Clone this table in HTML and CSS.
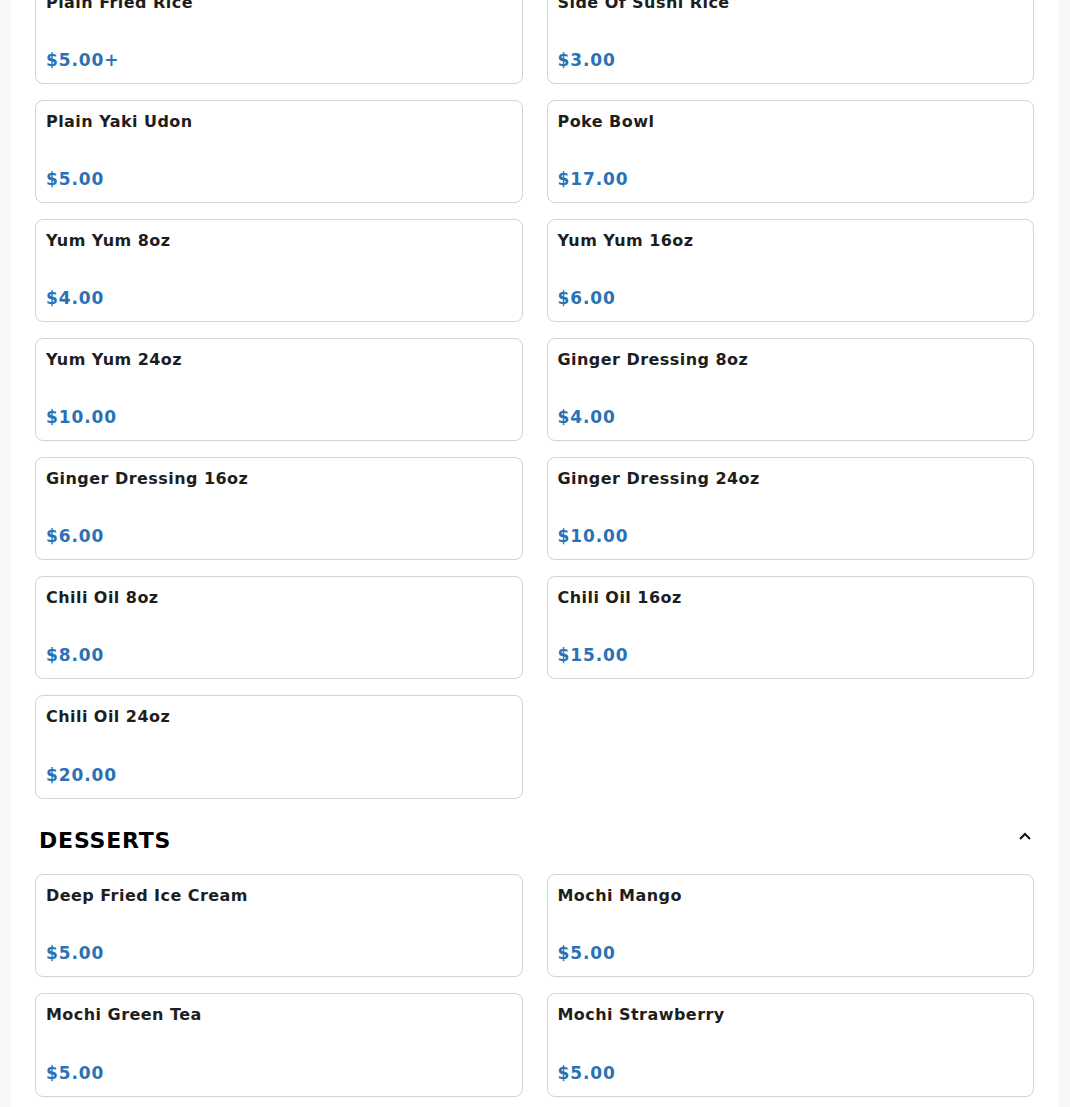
FILE: index.html
```html
<!DOCTYPE html>
<html>
<head>
<meta charset="utf-8">
<link rel="stylesheet" href="styles.css">
</head>
<body>
<main class="menu">
  <section class="category category-scrolled">
    <div class="grid">
      <div class="card"><div class="name">Plain Fried Rice</div><div class="price">$5.00+</div></div>
      <div class="card"><div class="name">Side Of Sushi Rice</div><div class="price">$3.00</div></div>
      <div class="card"><div class="name">Plain Yaki Udon</div><div class="price">$5.00</div></div>
      <div class="card"><div class="name">Poke Bowl</div><div class="price">$17.00</div></div>
      <div class="card"><div class="name">Yum Yum 8oz</div><div class="price">$4.00</div></div>
      <div class="card"><div class="name">Yum Yum 16oz</div><div class="price">$6.00</div></div>
      <div class="card"><div class="name">Yum Yum 24oz</div><div class="price">$10.00</div></div>
      <div class="card"><div class="name">Ginger Dressing 8oz</div><div class="price">$4.00</div></div>
      <div class="card"><div class="name">Ginger Dressing 16oz</div><div class="price">$6.00</div></div>
      <div class="card"><div class="name">Ginger Dressing 24oz</div><div class="price">$10.00</div></div>
      <div class="card"><div class="name">Chili Oil 8oz</div><div class="price">$8.00</div></div>
      <div class="card"><div class="name">Chili Oil 16oz</div><div class="price">$15.00</div></div>
      <div class="card card-last"><div class="name">Chili Oil 24oz</div><div class="price">$20.00</div></div>
    </div>
  </section>
  <section class="category">
    <div class="cat-head">
      <h2 class="cat-title">DESSERTS</h2>
      <svg class="chevron" width="14" height="10" viewBox="0 0 14 10"><path d="M2 8 L7 3 L12 8" fill="none" stroke="#111" stroke-width="2"/></svg>
    </div>
    <div class="grid">
      <div class="card"><div class="name">Deep Fried Ice Cream</div><div class="price">$5.00</div></div>
      <div class="card"><div class="name">Mochi Mango</div><div class="price">$5.00</div></div>
      <div class="card card-last"><div class="name">Mochi Green Tea</div><div class="price">$5.00</div></div>
      <div class="card card-last"><div class="name">Mochi Strawberry</div><div class="price">$5.00</div></div>
    </div>
  </section>
</main>
</body>
</html>
```
FILE: styles.css
```css
html, body {
  margin: 0;
  padding: 0;
  background: #f7f7f7;
  font-family: "DejaVu Sans", sans-serif;
  overflow: hidden;
}
.menu {
  margin: 0 11px;
  background: #fff;
  padding: 0 25px 40px 24px;
  min-height: 1200px;
}
.category-scrolled {
  margin-top: -19px;
}
.grid {
  display: grid;
  grid-template-columns: 1fr 1fr;
  column-gap: 24px;
  row-gap: 16px;
}
.card {
  box-sizing: border-box;
  border: 1px solid #d3d3d3;
  border-radius: 8px;
  padding: 11px 10px 13px;
  height: 103px;
  display: flex;
  flex-direction: column;
  justify-content: space-between;
}
.card-last {
  height: 104px;
  padding-top: 11px;
  padding-bottom: 13px;
}
.name {
  font-size: 16px;
  font-weight: bold;
  color: #1e1e1e;
  letter-spacing: 0.45px;
}
.price {
  font-size: 17px;
  font-weight: bold;
  color: #2a72b5;
  letter-spacing: 0.9px;
}
.cat-head {
  display: flex;
  justify-content: space-between;
  align-items: flex-start;
  margin: 29px 0 20px;
  padding: 0 1px 0 4px;
}
.cat-title {
  margin: 0;
  font-size: 22px;
  font-weight: bold;
  color: #000;
  letter-spacing: 0.8px;
  line-height: 26px;
}
.chevron {
  margin-top: 3px;
  margin-right: 1px;
}
```
